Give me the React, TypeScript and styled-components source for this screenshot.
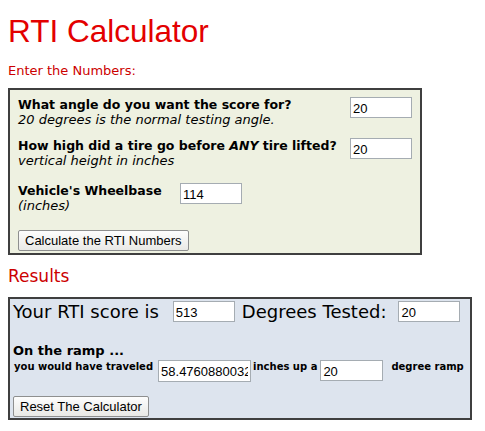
import React, { useState } from "react";
import styled, { createGlobalStyle } from "styled-components";

const GlobalStyle = createGlobalStyle`
  body {
    margin: 8px;
    background: #ffffff;
    font-family: "DejaVu Sans", Verdana, sans-serif;
    font-size: 13px;
    color: #000000;
  }
`;

const Title = styled.h1`
  margin: 5px 0 0;
  font: normal 31.5px/36px "Liberation Sans", Arial, sans-serif;
  color: #e30000;
`;

const SubHead = styled.div`
  margin-top: 14px;
  font-size: 13px;
  line-height: 15px;
  color: #cc0000;
`;

const SectionHead = styled.div`
  margin-top: 11px;
  font-size: 17px;
  line-height: 20px;
  color: #cc0000;
`;

const Panel = styled.div<{ $bg: string; $width: number }>`
  box-sizing: border-box;
  width: ${(p) => p.$width}px;
  border: 2px solid #3f3f3f;
  background: ${(p) => p.$bg};
`;

const InputPanel = styled(Panel)`
  margin-top: 10px;
  padding: 7px 6px 2px 8px;
`;

const ResultPanel = styled(Panel)`
  margin-top: 11px;
  padding: 2px 4px 1px 3px;
`;

const QuestionGrid = styled.div<{ $label: number }>`
  display: grid;
  grid-template-columns: ${(p) => p.$label}px 62px;
  row-gap: 11px;
  align-items: start;
`;

const Question = styled.div`
  line-height: 15px;
`;

const Prompt = styled.div`
  font-weight: bold;
  font-size: 12.5px;
  white-space: nowrap;
`;

const Hint = styled.div`
  font-style: italic;
`;

const Field = styled.input<{ $width?: number; $height?: number }>`
  box-sizing: border-box;
  width: ${(p) => p.$width ?? 62}px;
  height: ${(p) => p.$height ?? 21}px;
  margin: 0;
  padding: 1px 2px 0;
  border: 1px solid #a5acb2;
  background: #ffffff;
  font: 13px "Liberation Sans", Arial, sans-serif;
  color: #000000;
  outline: none;
`;

const Button = styled.button`
  height: 21px;
  padding: 0 6px;
  border: 1px solid #8e8f8f;
  border-radius: 2px;
  background: linear-gradient(#fdfdfd, #e9e9e6);
  font: 13px "Liberation Sans", Arial, sans-serif;
  color: #000000;
`;

const CalcButton = styled(Button)`
  margin-top: 17px;
`;

const ResetButton = styled(Button)`
  margin-top: 14px;
`;

const ScoreRow = styled.div`
  display: flex;
  align-items: center;
  font-size: 18px;
  line-height: 21px;
`;

const ScoreText = styled.span<{ $gap: number; $left?: number }>`
  margin: 0 ${(p) => p.$gap}px 0 ${(p) => p.$left ?? 0}px;
  white-space: nowrap;
`;

const RampHead = styled.div`
  margin-top: 21px;
  font-weight: bold;
  font-size: 13px;
  line-height: 15px;
`;

const TravelRow = styled.div`
  display: flex;
  align-items: flex-start;
  margin-top: 2px;
`;

const SmallBold = styled.span<{ $left: number; $right: number }>`
  margin: 0 ${(p) => p.$right}px 0 ${(p) => p.$left}px;
  padding-top: 1px;
  font-size: 10px;
  font-weight: bold;
  line-height: 12px;
  white-space: nowrap;
`;

export default function App() {
  const [angle, setAngle] = useState("20");
  const [height, setHeight] = useState("20");
  const [base, setBase] = useState("114");

  return (
    <>
      <GlobalStyle />
      <Title>RTI Calculator</Title>
      <SubHead>Enter the Numbers:</SubHead>
      <InputPanel $bg="#eef1e1" $width={414}>
        <QuestionGrid $label={332}>
          <Question>
            <Prompt>What angle do you want the score for?</Prompt>
            <Hint>20 degrees is the normal testing angle.</Hint>
          </Question>
          <Field value={angle} onChange={(e) => setAngle(e.target.value)} />
          <Question>
            <Prompt>
              How high did a tire go before <i>ANY</i> tire lifted?
            </Prompt>
            <Hint>vertical height in inches</Hint>
          </Question>
          <Field value={height} onChange={(e) => setHeight(e.target.value)} />
        </QuestionGrid>
        <QuestionGrid $label={162} style={{ marginTop: 15 }}>
          <Question>
            <Prompt>Vehicle's Wheelbase</Prompt>
            <Hint>(inches)</Hint>
          </Question>
          <Field value={base} onChange={(e) => setBase(e.target.value)} />
        </QuestionGrid>
        <CalcButton>Calculate the RTI Numbers</CalcButton>
      </InputPanel>

      <SectionHead>Results</SectionHead>
      <ResultPanel $bg="#dde4ee" $width={464}>
        <ScoreRow>
          <ScoreText $gap={14}>Your RTI score is</ScoreText>
          <Field defaultValue="513" />
          <ScoreText $gap={12} $left={7}>
            Degrees Tested:
          </ScoreText>
          <Field defaultValue="20" />
        </ScoreRow>
        <RampHead>On the ramp ...</RampHead>
        <TravelRow>
          <SmallBold $left={1} $right={5}>you would have traveled</SmallBold>
          <Field defaultValue="58.47608800321" $width={93} $height={22} />
          <SmallBold $left={2} $right={3}>inches up a</SmallBold>
          <Field defaultValue="20" $width={63} />
          <SmallBold $left={8} $right={0}>degree ramp</SmallBold>
        </TravelRow>
        <ResetButton>Reset The Calculator</ResetButton>
      </ResultPanel>
    </>
  );
}
